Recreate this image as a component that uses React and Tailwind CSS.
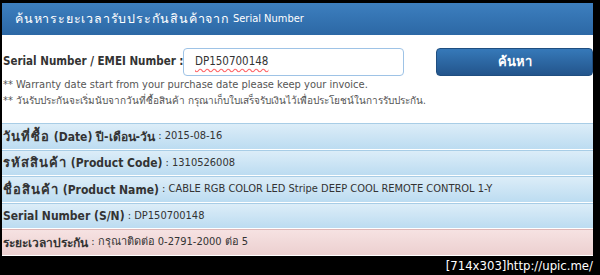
export default function App() {
  const th = "text-[13px] tracking-[1px]";
  const rows = [
    [<><span className={th}>วันที่ซื้อ</span> (Date) ปี-เดือน-วัน</>, "2015-08-16"],
    [<><span className={th}>รหัสสินค้า</span> (Product Code)</>, "1310526008"],
    [<><span className={th}>ชื่อสินค้า</span> (Product Name)</>, "CABLE RGB COLOR LED Stripe DEEP COOL REMOTE CONTROL 1-Y"],
    [<>Serial Number (S/N)</>, "DP150700148"],
  ];
  return (
    <div className="w-[600px] h-[275px] bg-black pt-[3px] pl-[2px] pr-[7px] flex flex-col overflow-hidden" style={{ fontFamily: "'DejaVu Sans Condensed', 'DejaVu Sans', sans-serif" }}>
      <div className="bg-white flex flex-col h-[253px]">
        <div className="h-[32px] flex items-center pl-[13px] text-white text-[11px] bg-gradient-to-b from-[#3d7fbf] to-[#2c68a5] whitespace-nowrap">
          <span className="text-[12.5px] tracking-[0.8px]">ค้นหาระยะเวลารับประกันสินค้าจาก</span>&nbsp;Serial Number
        </div>
        <div className="flex items-center mt-[13px] h-[28px]">
          <div className="text-[11.5px] font-bold text-[#333] w-[181px] pl-[1px] whitespace-nowrap">Serial Number / EMEI Number :</div>
          <div className="w-[222px] h-[28px] border border-[#9ec3e6] rounded-[4px] flex items-center pl-[11px] text-[11.5px] text-[#333]">
            <span className="underline decoration-wavy decoration-red-400 underline-offset-2">DP150700148</span>
          </div>
          <div className="ml-[32px] w-[157px] h-[28px] rounded-[4px] bg-gradient-to-b from-[#3679b9] to-[#23558c] border border-[#1f4e80] flex items-center justify-center text-white text-[13px] font-bold">ค้นหา</div>
        </div>
        <div className="text-[11px] text-[#555] leading-[16px] mt-[1px] pl-[1px] whitespace-nowrap">
          <div>** Warranty date start from your purchase date please keep your invoice.</div>
          <div>** <span className="text-[10px]">วันรับประกันจะเริ่มนับจากวันที่ซื้อสินค้า กรุณาเก็บใบเสร็จรับเงินไว้เพื่อประโยชน์ในการรับประกัน.</span></div>
        </div>
        <div className="mt-[14px] flex flex-col">
          {rows.map(([k, v], i) => (
            <div key={i} className="h-[26.5px] flex items-center pl-[1px] text-[12px] text-[#333] border-t border-[#a8cde6] border-b border-b-white bg-gradient-to-b from-[#dcedf8] to-[#bcdcf1] whitespace-nowrap">
              <span className="font-bold">{k}</span>
              <span className="text-[11px]">&nbsp;: {v}</span>
            </div>
          ))}
          <div className="h-[26px] flex items-center pl-[1px] text-[12px] text-[#333] border-t border-[#dfb8b8] bg-gradient-to-b from-[#f6e2e2] to-[#ecd0d0] whitespace-nowrap">
            <span className="font-bold">ระยะเวลาประกัน</span>
            <span className="text-[11px]">&nbsp;: กรุณาติดต่อ 0-2791-2000 ต่อ 5</span>
          </div>
        </div>
      </div>
      <div className="flex-1 flex items-center justify-end text-white text-[13px]">
        [714x303]http://upic.me/
      </div>
    </div>
  );
}
